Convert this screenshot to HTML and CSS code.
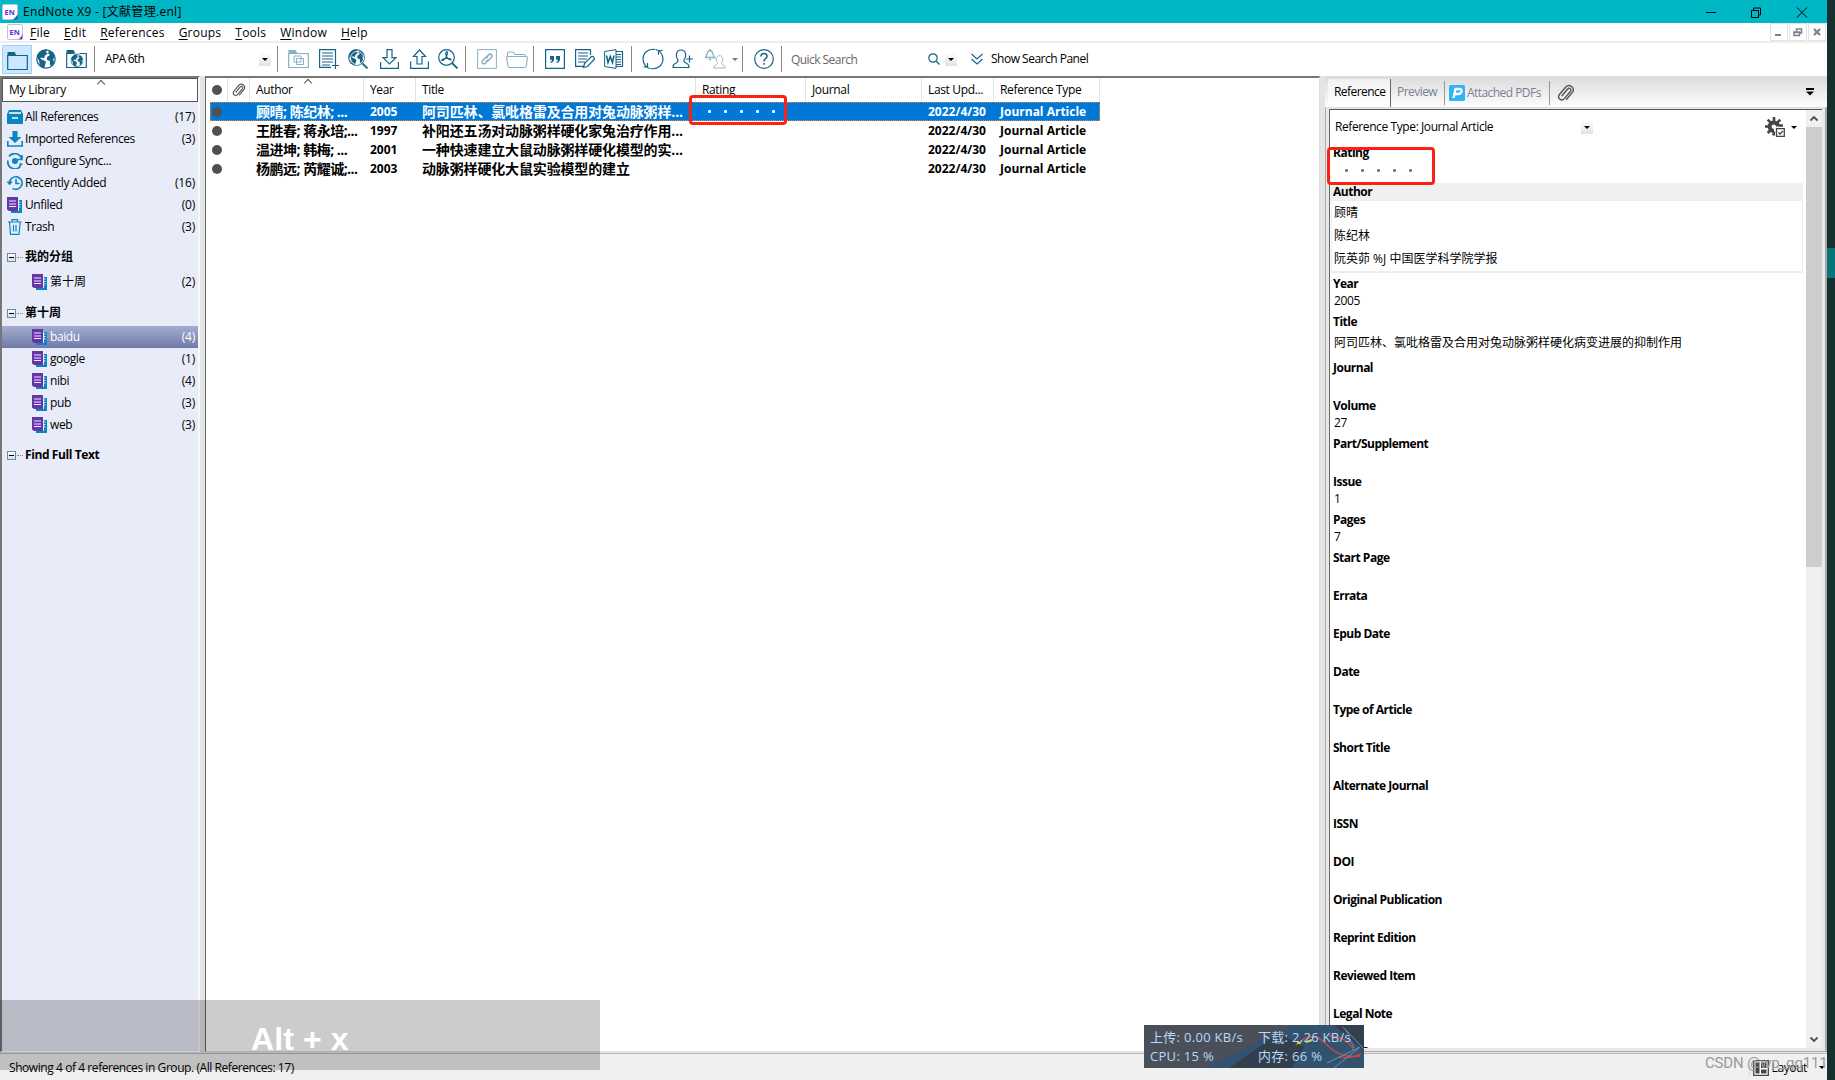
FILE: index.html
```html
<!DOCTYPE html>
<html lang="zh-CN">
<head>
    <meta charset="UTF-8">
    <title>EndNote X9 - [文献管理.enl]</title>
    <link rel="stylesheet" href="styles.css">
</head>
<body>
    <svg class="defs" width="0" height="0">
        <symbol id="logo" viewBox="0 0 16 16">
            <path d="M2 .5h12a1.500 1.500 0 0 1 1.500 1.500v9l-4.500 4.500H2A1.500 1.500 0 0 1 .5 14V2A1.500 1.500 0 0 1 2 .5z" fill="#fff" stroke="#c9bfdc"/>
            <path d="M15.500 9.500v4.500a1.500 1.500 0 0 1-1.500 1.500h-4.500q5 0 6-6z" fill="#5b2ea6"/>
            <text x="2.500" y="10.500" class="logo-text">EN</text>
        </symbol>
        <symbol id="folder" viewBox="0 0 21 20">
            <path d="M.7 4.500h19.600v14H.7z" fill="none" stroke="currentColor" stroke-width="1.200"/>
            <path d="M.5 5V1h7l1.500 2.500V5z" fill="currentColor"/>
        </symbol>
        <symbol id="globe" viewBox="0 0 20 20">
            <circle cx="10" cy="10" r="9.200" fill="none" stroke="currentColor" stroke-width="1.200"/>
            <path d="M2 5l4-4 5-.5-1 3 2 1-3 2-1 3-2-1-2 1 4 2 2 1-1 4-1 3-4-3-1-5-2-3zM13 2l4 2 2 5-2 1 1 3-2 4-2-1v-4l-3-1v-3l3-2-2-2z" fill="currentColor"/>
        </symbol>
        <symbol id="doc" viewBox="0 0 16 16">
            <path d="M12 3h3v13H4v-3h8z" fill="#0a85c4"/>
            <path d="M12 4.500h1.500v1H12zm0 2.500h1.500v1H12zm0 2.500h1.500v1H12zM11 3h1v11h-1z" fill="#e8ecf9"/>
            <path d="M0 0h11v14H2l-2-1.500z" fill="#6636a8"/>
            <path d="M2 4h7M2 7h7M2 9.500h7" stroke="#e8ecf9" stroke-width="1.200"/>
        </symbol>
        <symbol id="clip" viewBox="0 0 16 16">
            <path d="M4.500 10.500l5-6a1.600 1.600 0 0 1 2.500 2L6.500 13A2.800 2.800 0 0 1 2 9.500l6-7a3.800 3.800 0 0 1 6 4.500l-5.500 6.500" fill="none" stroke="currentColor" stroke-width="1.300" stroke-linecap="round"/>
        </symbol>
        <symbol id="person" viewBox="0 0 18 20">
            <path d="M6 11C3 7 4 1 9 1s6 6 3 10c-.5 2 .5 2.500 2.500 3.300 2 .7 2.500 2 2.500 4.200H1c0-2.200.5-3.500 2.500-4.200C5.500 13.500 6.500 13 6 11z" fill="none" stroke="currentColor" stroke-width="1.200"/>
        </symbol>
    </svg>

    <div class="screen">
    <div class="app">
        <header class="titlebar">
            <svg class="logo"><use href="#logo"/></svg>
            <span class="title">EndNote X9 - [文献管理.enl]</span>
            <svg class="window-buttons" viewBox="0 0 120 20">
                <path d="M6 10.500h10M51.500 8.500h7v7h-7zM53.500 8v-2h7v7h-2M97 5.500l10 10M107 5.500l-10 10" fill="none" stroke="#000"/>
            </svg>
        </header>

        <nav class="menubar">
            <svg class="logo"><use href="#logo"/></svg>
            <ul class="menu">
                <li><u>F</u>ile</li>
                <li><u>E</u>dit</li>
                <li><u>R</u>eferences</li>
                <li><u>G</u>roups</li>
                <li><u>T</u>ools</li>
                <li><u>W</u>indow</li>
                <li><u>H</u>elp</li>
            </ul>
            <div class="mdi-buttons">
                <span><svg viewBox="0 0 16 16"><path d="M4 11h6" stroke-width="2"/></svg></span>
                <span><svg viewBox="0 0 16 16"><path d="M4 8h5.500v3.500H4zM4 8.500h5M6.500 7V5h5v4H10" stroke-width="1.500"/></svg></span>
                <span><svg viewBox="0 0 16 16"><path d="M5 5l6 6M11 5l-6 6" stroke-width="2.200"/></svg></span>
            </div>
        </nav>

        <div class="toolbar">
            <span class="tool active"><svg class="w21"><use href="#folder"/></svg></span>
            <svg class="w20"><use href="#globe"/></svg>
            <svg class="w21" viewBox="0 0 21 20"><use href="#folder" width="21" height="20"/><circle cx="11" cy="11" r="7" fill="#fff"/><use href="#globe" x="4.500" y="5" width="13" height="13"/></svg>
            <i class="sep"></i>
            <span class="style-name">APA 6th</span>
            <i class="drop"></i>
            <i class="sep"></i>
            <svg class="w21 dim" viewBox="0 0 21 20"><use href="#folder" width="21" height="20"/><path d="M6 7h7v6H6zM8.500 9.500h7v6h-7z" fill="#fff" stroke="currentColor"/></svg>
            <svg class="w20" viewBox="0 0 20 20"><path d="M16.500 13V.6H.6v17.800H12M3 4h11M3 7h11M3 10h11M3 13h11M3 16h8M13 16.500h7M16.500 13v7" fill="none" stroke="currentColor" stroke-width="1.200"/></svg>
            <svg class="w20" viewBox="0 0 20 20"><use href="#globe" width="17" height="17"/><circle cx="9" cy="9" r="6.500" fill="none" stroke="#fff" stroke-width=".8"/><path d="M14.500 14.500l5 5" stroke="currentColor" stroke-width="1.800"/></svg>
            <svg class="w20" viewBox="0 0 20 20"><path d="M7 .6h5v8h4L9.500 15 3 8.600h4zM.6 13v6.400h17.800V13" fill="none" stroke="currentColor" stroke-width="1.200"/></svg>
            <svg class="w20" viewBox="0 0 20 20"><path d="M7 15V7.500H3.500L9.500 1l6 6.500H12V15zM.6 12.500v6.900h17.800v-6.900" fill="none" stroke="currentColor" stroke-width="1.200"/></svg>
            <svg class="w20" viewBox="0 0 20 20"><g fill="none" stroke="currentColor" stroke-width="1.200"><circle cx="8.500" cy="8.500" r="7.800"/><path d="M8 3q1.500-1 1.500 1c-.5 4-3 7-5 7.500-1.500 0-1-1.500 3-2 3-.5 5 0 5.500 1 0 1-3 0-4.500-3C7.500 5.500 7.500 4 8 3z"/></g><path d="M14 14l5.500 5.500" stroke="currentColor" stroke-width="1.800"/></svg>
            <i class="sep"></i>
            <svg class="w20 dim" viewBox="0 0 20 20"><path d="M.6.6h18.800v18.800H.6z" fill="none" stroke="currentColor"/><path d="M9 8.500l3-3q2-1 3 1 .5 1-3 4.500-1.500 1.500-3 0M11 11.500l-3 3q-2 1-3-1-.5-1 3-4.500 1.500-1.500 3 0" fill="none" stroke="currentColor" stroke-width="1.600"/></svg>
            <svg class="w22 dim" viewBox="0 0 22 20"><path d="M1.500 7.500V4.500q0-1.500 1.500-1.500h4l2 2.500h9.500q1 0 1 2M.6 8.500q0-1 1-1h18.800q1 0 1 1l-1 8q-.2 2-2 2H3.500q-1.500 0-1.700-2z" fill="none" stroke="currentColor" stroke-width="1.100"/></svg>
            <i class="sep"></i>
            <svg class="w20" viewBox="0 0 20 20"><path d="M.6.6h18.800v18.800H.6z" fill="none" stroke="currentColor" stroke-width="1.200"/><path d="M5 7h4v4q-.5 2.500-3.500 3v-1.200q1.500-.5 1.500-2H5zm6 0h4v4q-.5 2.500-3.500 3v-1.200q1.500-.5 1.500-2h-2z" fill="currentColor"/></svg>
            <svg class="w20" viewBox="0 0 20 20"><path d="M15.500 6V.6H.6v16.800H9M3 4h10M3 7h10M3 10h9M3 13h7M8.500 18.500l1-4 7-7q1.500-.5 2.500 1t0 2l-6.500 7z" fill="none" stroke="currentColor" stroke-width="1.200"/></svg>
            <svg class="w20" viewBox="0 0 20 20"><path d="M12 2.500h6.500v15H12M12 5.500h5M12 8h5M12 10.500h5M12 13h5M12 15.500h5" fill="none" stroke="currentColor" stroke-width="1.200"/><path d="M.6 2.500L12 .6v18.800L.6 17.500z" fill="#fff" stroke="currentColor"/><path d="M2.500 6.500l1.500 7 2.300-6 2.200 6L10 6.500" fill="none" stroke="currentColor" stroke-width="1.500"/></svg>
            <i class="sep"></i>
            <svg class="w22 sync" viewBox="0 0 22 22"><path d="M8 20.500A10 10 0 0 1 4.500 3.500q4-3 9-2M14 1.500a10 10 0 0 1 3.500 17q-4 3-9 2M20.500 2.500l-4 .2v4M1.500 19h4v-4" fill="none" stroke="currentColor" stroke-width="1.200"/></svg>
            <svg class="w21" viewBox="0 0 21 20"><use href="#person" width="18" height="20"/><path d="M14 10h7M17.500 6.500v7" stroke="currentColor" stroke-width="1.200"/></svg>
            <svg class="w21 dim" viewBox="0 0 21 20"><path d="M.5 8.500c2-1.500 1-7 4.500-7s2.500 5.500 4.500 7zM4 10.500h2M5 0v1.500" fill="none" stroke="currentColor" stroke-width="1.300"/><use href="#person" x="8" y="6" width="13" height="14"/></svg>
            <i class="tri dim-tri"></i>
            <i class="sep"></i>
            <svg class="w20" viewBox="0 0 20 20"><circle cx="10" cy="10" r="9.300" fill="none" stroke="currentColor" stroke-width="1.200"/><path d="M7 7.500q0-3 3-3t3 2.800q0 1.400-1.500 2.400T10 12.500M10 14v1.800" fill="none" stroke="currentColor" stroke-width="1.500"/></svg>
            <i class="sep"></i>
            <span class="quick-search">Quick Search</span>
            <svg class="w12" viewBox="0 0 12 12"><circle cx="5" cy="5" r="4.200" fill="none" stroke="currentColor" stroke-width="1.200"/><path d="M8 8l3.500 3.500" stroke="currentColor" stroke-width="1.300"/></svg>
            <i class="drop"></i>
            <svg class="w12" viewBox="0 0 12 12"><path d="M.5 1L6 6l5.500-5M.5 6L6 11l5.500-5" fill="none" stroke="currentColor" stroke-width="1.100"/></svg>
            <span class="search-panel">Show Search Panel</span>
        </div>

        <main class="workspace">
            <aside class="sidebar">
                <div class="library-title">My Library<i class="caret"></i></div>
                <ul class="groups">
                    <li><svg viewBox="0 0 16 16"><path d="M2 1h12l2 4v9q0 1-1 1H1q-1 0-1-1V5z" fill="#0a85c4"/><path d="M2 4h12M5 9h6" stroke="#fff" stroke-width="1.500"/></svg><span>All References</span><b>(17)</b></li>
                    <li><svg viewBox="0 0 16 16"><path d="M5.500 0h5v6h4L8 12 1.500 6h4z" fill="#0a85c4"/><path d="M.8 10v5h14.400v-5" fill="none" stroke="#0a85c4" stroke-width="1.600"/></svg><span>Imported References</span><b>(3)</b></li>
                    <li><svg viewBox="0 0 16 16"><circle cx="8" cy="8" r="3" fill="#0a85c4"/><path d="M2 3.500A7 7 0 0 1 14.500 6M1 7.500A7 7 0 0 0 13.500 13M15 2v4.500h-4.500M12.500 14.500l1-3.500 2 .5" fill="none" stroke="#0a85c4" stroke-width="1.700"/></svg><span>Configure Sync...</span></li>
                    <li><svg viewBox="0 0 16 16"><path d="M2.500 8a6.300 6.300 0 1 1 3 5.400M9 4v4.500h3.500M.5 6.500L2.500 9 5 6.500" fill="none" stroke="#0a85c4" stroke-width="1.600"/></svg><span>Recently Added</span><b>(16)</b></li>
                    <li><svg><use href="#doc"/></svg><span>Unfiled</span><b>(0)</b></li>
                    <li><svg viewBox="0 0 16 16"><path d="M1 3h13.500M5 3V.7h5.500V3M2.500 3l1 12.300h8.500L13.200 3M6.500 6v6.500M9 6v6.500" fill="none" stroke="#0a85c4" stroke-width="1.200"/></svg><span>Trash</span><b>(3)</b></li>
                </ul>
                <h2 class="group-set cjk"><i class="minus"></i>我的分组</h2>
                <ul class="groups nested">
                    <li class="cjk"><svg><use href="#doc"/></svg><span>第十周</span><b>(2)</b></li>
                </ul>
                <h2 class="group-set second cjk"><i class="minus"></i>第十周</h2>
                <ul class="groups nested">
                    <li class="selected"><svg><use href="#doc"/></svg><span>baidu</span><b>(4)</b></li>
                    <li><svg><use href="#doc"/></svg><span>google</span><b>(1)</b></li>
                    <li><svg><use href="#doc"/></svg><span>nibi</span><b>(4)</b></li>
                    <li><svg><use href="#doc"/></svg><span>pub</span><b>(3)</b></li>
                    <li><svg><use href="#doc"/></svg><span>web</span><b>(3)</b></li>
                </ul>
                <h2 class="group-set third"><i class="minus"></i>Find Full Text</h2>
            </aside>

            <section class="references">
                <div class="ref-row ref-head">
                    <span><i class="dot"></i></span>
                    <span><svg class="clip"><use href="#clip"/></svg></span>
                    <span>Author<i class="caret"></i></span>
                    <span>Year</span>
                    <span>Title</span>
                    <span>Rating</span>
                    <span>Journal</span>
                    <span>Last Upd...</span>
                    <span>Reference Type</span>
                </div>
                <div class="ref-row selected">
                    <span><i class="dot"></i></span><span></span>
                    <span class="names">顾晴; 陈纪林; ...</span>
                    <span>2005</span>
                    <span class="ref-title">阿司匹林、氯吡格雷及合用对兔动脉粥样...</span>
                    <span class="stars"><i></i><i></i><i></i><i></i><i></i></span>
                    <span></span>
                    <span>2022/4/30</span>
                    <span>Journal Article</span>
                </div>
                <div class="ref-row">
                    <span><i class="dot"></i></span><span></span>
                    <span class="names">王胜春; 蒋永培;...</span>
                    <span>1997</span>
                    <span class="ref-title">补阳还五汤对动脉粥样硬化家兔治疗作用...</span>
                    <span></span><span></span>
                    <span>2022/4/30</span>
                    <span>Journal Article</span>
                </div>
                <div class="ref-row">
                    <span><i class="dot"></i></span><span></span>
                    <span class="names">温进坤; 韩梅; ...</span>
                    <span>2001</span>
                    <span class="ref-title">一种快速建立大鼠动脉粥样硬化模型的实...</span>
                    <span></span><span></span>
                    <span>2022/4/30</span>
                    <span>Journal Article</span>
                </div>
                <div class="ref-row">
                    <span><i class="dot"></i></span><span></span>
                    <span class="names">杨鹏远; 芮耀诚;...</span>
                    <span>2003</span>
                    <span class="ref-title">动脉粥样硬化大鼠实验模型的建立</span>
                    <span></span><span></span>
                    <span>2022/4/30</span>
                    <span>Journal Article</span>
                </div>
            </section>

            <section class="detail">
                <div class="tabs">
                    <span class="tab current">Reference</span>
                    <span class="tab preview">Preview</span>
                    <span class="tab pdfs"><svg viewBox="0 0 16 16"><rect width="16" height="16" rx="1.500" fill="#2fb4f5"/><path d="M4.500 13L6.500 4h4q2.500 0 2 2.500T9 9H6.500" fill="none" stroke="#fff" stroke-width="2.300"/></svg>Attached PDFs</span>
                    <svg class="clip" viewBox="0 0 16 16"><use href="#clip"/></svg>
                    <svg class="overflow" viewBox="0 0 8 8"><path d="M0 0h8v2H0zM0 3.500h8L4 7.500z"/></svg>
                </div>
                <div class="pane">
                    <div class="pane-body">
                        <div class="ref-type">
                            <span class="ref-type-label">Reference Type:</span>
                            <span class="ref-type-value">Journal Article</span>
                            <i class="drop"></i>
                            <svg class="gear" viewBox="0 0 20 20"><path d="M13 9.500A4.200 4.200 0 1 0 9 13.800" fill="none" stroke="#444" stroke-width="4"/><path d="M9 0v4M2.700 2.700l3 3M0 9.500h4M2.700 16l3-3M15.300 2.700l-3 3M18 8.500h-4M8.500 18.500l.5-4" stroke="#444" stroke-width="2.600"/><path d="M11.500 11.700h7.800v7.600h-7.800z" fill="#fff" stroke="#444" stroke-width="1.300"/><path d="M13.500 15.500l1.500 1.500 3-3" fill="none" stroke="#444" stroke-width="1.300"/></svg>
                            <i class="tri"></i>
                        </div>
                        <dl class="fields">
                            <dt class="rating">Rating</dt><dd class="stars"><i></i><i></i><i></i><i></i><i></i></dd>
                            <dt class="author">Author</dt>
                            <dd class="authors"><p>顾晴</p><p>陈纪林</p><p>阮英茆 %J 中国医学科学院学报</p></dd>
                            <dt>Year</dt><dd>2005</dd>
                            <dt>Title</dt><dd class="long">阿司匹林、氯吡格雷及合用对兔动脉粥样硬化病变进展的抑制作用</dd>
                            <dt>Journal</dt><dd></dd>
                            <dt>Volume</dt><dd>27</dd>
                            <dt>Part/Supplement</dt><dd></dd>
                            <dt>Issue</dt><dd>1</dd>
                            <dt>Pages</dt><dd>7</dd>
                            <dt>Start Page</dt><dd></dd>
                            <dt>Errata</dt><dd></dd>
                            <dt>Epub Date</dt><dd></dd>
                            <dt>Date</dt><dd></dd>
                            <dt>Type of Article</dt><dd></dd>
                            <dt>Short Title</dt><dd></dd>
                            <dt>Alternate Journal</dt><dd></dd>
                            <dt>ISSN</dt><dd></dd>
                            <dt>DOI</dt><dd></dd>
                            <dt>Original Publication</dt><dd></dd>
                            <dt>Reprint Edition</dt><dd></dd>
                            <dt>Reviewed Item</dt><dd></dd>
                            <dt>Legal Note</dt><dd></dd>
                            <dt>PMCID</dt>
                        </dl>
                    </div>
                    <div class="scrollbar">
                        <svg viewBox="0 0 16 17"><path d="M4.500 10.500L8 7l3.500 3.500" fill="none" stroke="#505050" stroke-width="1.800"/></svg>
                        <i class="thumb"></i>
                        <svg viewBox="0 0 16 17"><path d="M4.500 6.500L8 10l3.500-3.500" fill="none" stroke="#505050" stroke-width="1.800"/></svg>
                    </div>
                </div>
            </section>
        </main>

        <footer class="statusbar">
            <span class="status-text">Showing 4 of 4 references in Group. (All References: 17)</span>
            <span class="layout-button">
                <svg viewBox="0 0 16 16"><path d="M.7.7h14.600v14.600H.7z" fill="#fff" stroke="#444" stroke-width="1.300"/><path d="M2.500 2.500h4v11h-4zM8 2.500h5.500V8H8zM8 9.500h5.500v4H8z" fill="#444"/></svg>
                <span>Layout</span><i class="tri"></i>
            </span>
        </footer>
    </div>
    <div class="desktop"><i></i></div>
    </div>

    <div class="mark mark-list"></div>
    <div class="mark mark-detail"></div>
    <div class="key-display"><span>Alt + x</span></div>
    <div class="net-monitor">
        <svg viewBox="0 0 220 43" preserveAspectRatio="none">
            <path d="M60 43L150 0h70v43z" fill="#24557c" opacity=".6"/>
            <path d="M85 43l50-35 25 14-12 21zM190 0l30 26V0z" fill="#343941" opacity=".75"/>
            <path d="M152 20q16-16 30-1t34 12M195 32q10 2 22-3M185 11q16-1 25 14" fill="none" stroke="#c7444c" stroke-width="1.500"/>
            <path d="M183 38l33-16M199 2l21 22M202 5l8 18M190 43l25-20" fill="none" stroke="#5d98bd"/>
            <path d="M153 18h4M162 17l6-2" stroke="#a8e62e" stroke-width="2"/>
        </svg>
        <span class="up">上传: 0.00 KB/s</span><span>下载: 2.26 KB/s</span>
        <span class="cpu">CPU: 15 %</span><span>内存: 66 %</span>
    </div>
    <div class="watermark">CSDN @wp_qq111</div>
</body>
</html>
```
FILE: styles.css
```css
* {
    margin: 0;
    padding: 0;
    box-sizing: border-box;
}

body {
    width: 1835px;
    height: 1080px;
    overflow: hidden;
    font-family: 'Open Sans', 'Noto Sans CJK SC', sans-serif;
    font-size: 12px;
    line-height: 16px;
    letter-spacing: -0.4px;
    color: #000;
    background: #fff;
    white-space: nowrap;
}

ul {
    list-style: none;
}

svg {
    display: block;
    flex: none;
}

.defs {
    position: absolute;
}

.cjk {
    letter-spacing: 0;
}

.screen {
    display: flex;
    height: 1080px;
}

.app {
    width: 1827px;
    display: flex;
    flex-direction: column;
}

.desktop {
    width: 8px;
    padding-top: 248px;
    background: #16302d;
}

.desktop i {
    display: block;
    height: 30px;
    background: #087578;
}

/* Title and menu */
.titlebar {
    height: 23px;
    flex: none;
    display: flex;
    align-items: center;
    padding-left: 2px;
    background: #00b7c6;
}

.logo {
    width: 16px;
    height: 16px;
}

.logo-text {
    font: bold 7.5px 'Open Sans', sans-serif;
    letter-spacing: 0;
    fill: #5b2ee0;
}

.title {
    margin-left: 5px;
    letter-spacing: 0.3px;
}

.window-buttons {
    width: 120px;
    height: 20px;
    margin-left: auto;
    margin-right: 7px;
}

.menubar {
    height: 20px;
    flex: none;
    display: flex;
    align-items: center;
    padding-left: 7px;
    border-bottom: 2px solid #eee;
}

.menu {
    display: flex;
    gap: 14px;
    margin-left: 7px;
    padding-top: 1px;
    letter-spacing: 0.23px;
}

.menu u {
    text-underline-offset: 2px;
}

.mdi-buttons {
    display: flex;
    gap: 1px;
    margin-left: auto;
    margin-right: 1px;
}

.mdi-buttons span {
    width: 18px;
    height: 18px;
    border: 1px solid #e2e2e2;
}

.mdi-buttons svg {
    width: 16px;
    height: 16px;
    fill: none;
    stroke: #748291;
}

/* Toolbar */
.toolbar {
    height: 33px;
    flex: none;
    display: grid;
    grid-template-columns: 34px 30px 28px 11px 154px 18px 11px 31px 29px 32px 30px 28px 27px 12px 29px 27px 12px 30px 29px 27px 11px 30px 33px 27px 10px 12px 27px 10px 137px 17px 26px 20px 200px;
    align-items: center;
    padding: 0 0 1px 2px;
    color: #146389;
}

.toolbar svg,
.tool {
    height: 20px;
}

.toolbar .sync {
    height: 22px;
}

.tool.active {
    width: 30px;
    height: 29px;
    padding: 5px 4px;
    border: 1px solid #99d1ff;
    background: #cce8ff;
}

.tool.active svg {
    height: 20px;
}

.w12 { width: 12px; }
.w20 { width: 20px; }
.w21 { width: 21px; }
.w22 { width: 22px; }

.toolbar .w12 {
    height: 12px;
}

.dim {
    opacity: 0.5;
}

.sep {
    width: 1px;
    height: 26px;
    background: #888;
}

.style-name,
.search-panel {
    color: #000;
}

.style-name {
    letter-spacing: -0.7px;
}

.search-panel {
    letter-spacing: -0.5px;
}

.quick-search {
    padding-top: 2px;
    letter-spacing: -0.55px;
    color: #666;
}

.drop {
    width: 12px;
    height: 14px;
    display: flex;
    align-items: center;
    justify-content: center;
    background: linear-gradient(#fff, #e2e2e2);
}

.drop::after,
.tri {
    content: '';
    width: 0;
    height: 0;
    border: 3px solid transparent;
    border-top-color: #000;
    border-bottom: 0;
}

.dim-tri {
    border-top-color: #777;
}

/* Three panes */
.workspace {
    flex: 1;
    min-height: 0;
    display: flex;
    background: #e4e4e4;
}

.sidebar {
    width: 200px;
    height: 976px;
    border-left: 2px solid #777;
    border-right: 2px solid #f8f8f8;
    border-top: 2px solid #777;
    border-bottom: 1px solid #fff;
    background: #e8ecf9;
}

.library-title {
    position: relative;
    height: 24px;
    padding: 3px 6px;
    letter-spacing: -0.2px;
    border: 1px solid #555;
    background: #fff;
}

.caret {
    position: absolute;
    width: 6px;
    height: 6px;
    left: 95px;
    top: 2px;
    border: solid #555;
    border-width: 1px 0 0 1px;
    transform: rotate(45deg);
}

.library-title + .groups {
    padding-top: 4px;
}

.groups li {
    display: flex;
    align-items: center;
    height: 22px;
    padding: 0 3px 0 5px;
}

.groups svg {
    width: 16px;
    height: 16px;
    margin-right: 2px;
}

.groups b {
    margin-left: auto;
    margin-top: -1px;
    font-weight: normal;
    letter-spacing: -0.2px;
}

.groups.nested li {
    padding-left: 30px;
}

.groups li.selected {
    color: #fff;
    background: linear-gradient(#a3acd0, #717ba9);
}

.group-set {
    display: flex;
    align-items: center;
    height: 18px;
    margin: 10px 0 5px;
    padding-left: 5px;
    font-size: 12px;
}

.group-set.second {
    margin: 11px 0 4px;
}

.group-set.third {
    margin-top: 10px;
}

.minus {
    position: relative;
    width: 9px;
    height: 9px;
    margin-right: 9px;
    border: 1px solid #6c8aa8;
    background: linear-gradient(#fff, #ddd);
}

.minus::before {
    content: '';
    position: absolute;
    left: 1px;
    top: 3px;
    width: 5px;
    height: 1px;
    background: #000;
}

.minus::after {
    content: '';
    position: absolute;
    left: 9px;
    top: 3px;
    width: 6px;
    border-top: 1px dotted #789;
}

/* Reference list */
.references {
    width: 1115px;
    height: 976px;
    margin-left: 5px;
    padding-left: 4px;
    border-left: 1px solid #666;
    border-top: 2px solid #777;
    border-right: 1px solid #ddd;
    border-bottom: 1px solid #e0e0e0;
    background: #fff;
}

.ref-row {
    display: grid;
    grid-template-columns: 18px 22px 114px 52px 280px 110px 116px 72px 106px;
    width: 890px;
    height: 19px;
    align-items: center;
    font-weight: bold;
    letter-spacing: 0;
}

.ref-row > span {
    padding-left: 6px;
}

.ref-row > span:first-child {
    padding-left: 2px;
}

.ref-row .names,
.ref-row .ref-title {
    font-size: 14px;
    letter-spacing: -0.5px;
}

.ref-row .ref-title {
    letter-spacing: -0.15px;
}

.ref-head {
    height: 24px;
    font-weight: normal;
    letter-spacing: -0.35px;
}

.ref-head > span {
    position: relative;
    height: 24px;
    padding-top: 4px;
    border-right: 1px solid #e3e3e3;
}

.ref-head .caret {
    left: 55px;
}

.ref-head .dot {
    margin-top: 3px;
}

.ref-head .clip {
    margin: 1px 0 0 -2px;
}

.dot {
    display: block;
    width: 10px;
    height: 10px;
    border-radius: 50%;
    background: #505050;
}

.clip {
    width: 14px;
    height: 14px;
    color: #555;
}

.ref-row.selected {
    color: #fff;
    background: #0078d7;
    outline: 1px dotted #d98b3e;
    outline-offset: -1px;
}

.stars {
    display: flex;
    gap: 13px;
}

.stars i {
    width: 3px;
    height: 3px;
    border-radius: 1px;
    background: currentColor;
}

.ref-row > .stars {
    padding-left: 12px;
}

/* Reference detail */
.detail {
    width: 502px;
    margin-left: 5px;
    display: flex;
    flex-direction: column;
}

.tabs {
    display: flex;
    height: 31px;
    padding: 3px 13px 0 3px;
    background: linear-gradient(#dadada, #fdfdfd);
    align-items: center;
    letter-spacing: -0.55px;
    color: #7a8290;
}

.tab {
    height: 24px;
    line-height: 22px;
}

.tab.current {
    width: 63px;
    height: 28px;
    padding-left: 6px;
    line-height: 26px;
    color: #000;
    border-right: 1px solid #666;
    background: linear-gradient(#f2f2f2, #fff);
}

.tab.preview {
    width: 54px;
    padding-left: 6px;
    border-right: 1px solid #999;
}

.tab.pdfs {
    display: flex;
    align-items: center;
    gap: 2px;
    width: 105px;
    padding-left: 4px;
    border-right: 1px solid #999;
}

.tab svg {
    width: 16px;
    height: 16px;
}

.tabs > .clip {
    width: 18px;
    height: 18px;
    margin-left: 7px;
}

.overflow {
    margin-left: auto;
    margin-top: -2px;
    width: 8px;
    height: 8px;
}

.pane {
    display: flex;
    height: 945px;
    border: 1px solid #aaa;
    border-top: 1px solid #ddd;
    border-right: 2px solid #aaa;
    padding: 1px 3px 3px;
    background: #e9e9e9;
}

.pane-body {
    flex: 1;
    overflow: hidden;
    border-top: 1px solid #555;
    border-left: 1px solid #666;
    background: #fff;
}

.ref-type {
    display: flex;
    align-items: center;
    height: 36px;
    padding: 0 0 2px 5px;
}

.ref-type-value {
    margin-left: 6px;
    width: 160px;
}

.gear {
    width: 20px;
    height: 20px;
    margin-left: auto;
    margin-right: 6px;
}

.ref-type .tri {
    margin-right: 9px;
}

.ref-type-label {
    width: 80px;
}

.fields dt {
    height: 17px;
    line-height: 17px;
    padding-left: 3px;
    font-weight: bold;
    letter-spacing: -0.5px;
}

.fields dd {
    height: 21px;
    line-height: 17px;
    padding-left: 4px;
}

.fields dd.long {
    height: 29px;
    line-height: 25px;
    letter-spacing: 0;
}

.fields dd.stars {
    height: 21px;
    padding: 7px 0 0 15px;
    color: #777;
}

.fields dt.rating {
    height: 16px;
    line-height: 14px;
}

.fields dt.author {
    margin: 0 3px 0 0;
    background: #f0f0f0;
}

.fields dd.authors {
    height: 73px;
    margin: 0 3px 2px 1px;
    padding: 0 0 0 2px;
    border: 1px solid #eee;
    border-bottom-width: 2px;
    letter-spacing: 0;
}

.authors p {
    height: 23px;
    line-height: 23px;
}

.scrollbar {
    width: 16px;
    display: flex;
    flex-direction: column;
    border-top: 1px solid #555;
    background: #f0f0f0;
}

.scrollbar svg {
    height: 17px;
}

.thumb {
    height: 440px;
    margin-bottom: auto;
    background: #cdcdcd;
}

/* Status bar */
.statusbar {
    height: 27px;
    flex: none;
    display: flex;
    align-items: center;
    padding: 1px 2px 0 9px;
    border-top: 1px solid #bbb;
    background: #f0f0f0;
}

.status-text {
    letter-spacing: -0.43px;
}

.layout-button {
    display: flex;
    align-items: center;
    gap: 3px;
    margin-left: auto;
    padding-left: 3px;
    border-left: 1px solid #ddd;
}

.layout-button svg {
    width: 16px;
    height: 16px;
}

.layout-button .tri {
    margin-left: 9px;
}

/* Floating layers over the window */
.mark {
    position: absolute;
    border: 3px solid #ff2015;
    border-radius: 4px;
}

.mark-list {
    left: 689px;
    top: 95px;
    width: 98px;
    height: 30px;
}

.mark-detail {
    left: 1327px;
    top: 147px;
    width: 108px;
    height: 38px;
}

.key-display {
    position: absolute;
    left: 0;
    top: 1000px;
    width: 600px;
    height: 70px;
    background: rgba(0, 0, 0, 0.2);
}

.key-display span {
    display: block;
    height: 51px;
    padding: 19px 0 0 251px;
    overflow: hidden;
    font: bold 32px/40px 'Liberation Sans', sans-serif;
    letter-spacing: 0.1px;
    color: #fff;
}

.net-monitor {
    position: absolute;
    left: 1144px;
    top: 1025px;
    width: 220px;
    height: 43px;
    display: grid;
    grid-template-columns: 108px 1fr;
    padding: 2px 0 2px 6px;
    align-items: center;
    font-size: 13px;
    letter-spacing: 0.3px;
    color: #b5d9f8;
    background: #4a4f59;
}

.net-monitor svg {
    position: absolute;
    left: 0;
    top: 0;
    width: 220px;
    height: 43px;
}

.net-monitor span {
    position: relative;
}

.watermark {
    position: absolute;
    left: 1705px;
    top: 1053px;
    font: 15px/20px Roboto, sans-serif;
    letter-spacing: -0.2px;
    color: #999;
}
```
